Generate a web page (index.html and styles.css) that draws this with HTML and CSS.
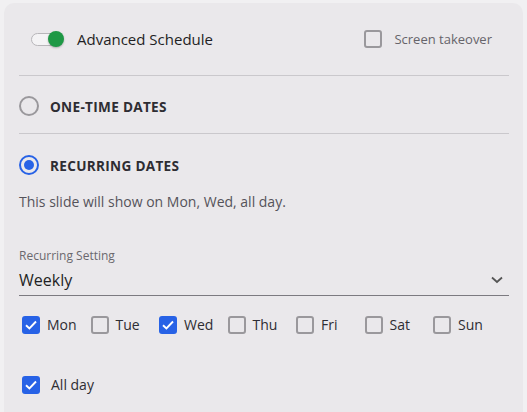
FILE: index.html
```html
<!DOCTYPE html>
<html>
<head>
<meta charset="utf-8">
<link rel="stylesheet" href="styles.css">
</head>
<body>
<div class="card">
  <div class="top-row">
    <div class="adv">
      <span class="toggle"><span class="thumb"></span></span>
      <span class="adv-label">Advanced Schedule</span>
    </div>
    <label class="takeover">
      <span class="box"></span>
      <span class="takeover-label">Screen takeover</span>
    </label>
  </div>
  <div class="divider"></div>
  <div class="radio-row one-time">
    <span class="radio"></span>
    <span class="radio-label">ONE-TIME DATES</span>
  </div>
  <div class="divider"></div>
  <div class="radio-row recurring">
    <span class="radio on"></span>
    <span class="radio-label">RECURRING DATES</span>
  </div>
  <p class="desc">This slide will show on Mon, Wed, all day.</p>
  <div class="field">
    <div class="field-label">Recurring Setting</div>
    <div class="select">
      <span class="select-value">Weekly</span>
      <svg class="chev" width="12" height="8" viewBox="0 0 12 8"><path d="M1 1.5 L6 6 L11 1.5" fill="none" stroke="#555" stroke-width="1.8"/></svg>
    </div>
  </div>
  <div class="days">
    <div class="day"><span class="box checked"><svg viewBox="0 0 18 18" width="18" height="18"><path d="M4 9.3 L7.4 12.5 L14 5.5" fill="none" stroke="#fff" stroke-width="1.9"/></svg></span><span class="day-label">Mon</span></div>
    <div class="day"><span class="box"></span><span class="day-label">Tue</span></div>
    <div class="day"><span class="box checked"><svg viewBox="0 0 18 18" width="18" height="18"><path d="M4 9.3 L7.4 12.5 L14 5.5" fill="none" stroke="#fff" stroke-width="1.9"/></svg></span><span class="day-label">Wed</span></div>
    <div class="day"><span class="box"></span><span class="day-label">Thu</span></div>
    <div class="day"><span class="box"></span><span class="day-label">Fri</span></div>
    <div class="day"><span class="box"></span><span class="day-label">Sat</span></div>
    <div class="day"><span class="box"></span><span class="day-label">Sun</span></div>
  </div>
  <div class="allday">
    <span class="box checked"><svg viewBox="0 0 18 18" width="18" height="18"><path d="M4 9.3 L7.4 12.5 L14 5.5" fill="none" stroke="#fff" stroke-width="1.9"/></svg></span>
    <span class="allday-label">All day</span>
  </div>
</div>
</body>
</html>
```
FILE: styles.css
```css
html, body {
  margin: 0;
  padding: 0;
  background: #f1f0f2;
  font-family: "Open Sans", "Noto Sans", sans-serif;
  overflow: hidden;
}
.card {
  margin: 3px 4px 0 4px;
  height: 420px;
  background: #eae8eb;
  border-radius: 10px 10px 0 0;
  padding: 0 14px 0 15px;
  box-sizing: border-box;
}
.top-row {
  height: 72px;
  display: flex;
  align-items: center;
  justify-content: space-between;
  padding: 0 17px 0 12px;
}
.adv {
  display: flex;
  align-items: center;
}
.toggle {
  position: relative;
  width: 31px;
  height: 13px;
  border-radius: 7px;
  background: #f4f3f5;
  border: 1px solid #b8b6ba;
  box-sizing: border-box;
}
.thumb {
  position: absolute;
  right: -3px;
  top: -2.5px;
  width: 16px;
  height: 16px;
  border-radius: 50%;
  background: #1e9845;
  box-shadow: 0 1px 2px rgba(0,0,0,0.25);
}
.adv-label {
  margin-left: 15px;
  font-size: 15px;
  color: #1f1f24;
}
.takeover {
  display: flex;
  align-items: center;
}
.box {
  display: inline-block;
  width: 18px;
  height: 18px;
  box-sizing: border-box;
  border: 2px solid #9a989c;
  border-radius: 3px;
  flex: none;
}
.box.checked {
  border: none;
  background: #2762e6;
}
.box svg {
  display: block;
}
.takeover-label {
  margin-left: 12px;
  font-size: 13px;
  color: #66646a;
}
.divider {
  height: 1px;
  background: #cac8cc;
}
.radio-row {
  display: flex;
  align-items: center;
}
.one-time {
  height: 57px;
  padding-top: 3px;
  box-sizing: border-box;
}
.recurring {
  margin-top: 21px;
  height: 20px;
}
.radio {
  width: 20px;
  height: 20px;
  border-radius: 50%;
  border: 2px solid #9a989c;
  box-sizing: border-box;
  position: relative;
}
.radio.on {
  border-color: #2762e6;
}
.radio.on::after {
  content: "";
  position: absolute;
  left: 3px;
  top: 3px;
  width: 10px;
  height: 10px;
  border-radius: 50%;
  background: #2762e6;
}
.radio-label {
  margin-left: 11px;
  font-size: 13.6px;
  font-weight: 700;
  color: #2e2d33;
  letter-spacing: 0.3px;
}
.desc {
  margin: 17px 0 0 0;
  font-size: 14px;
  line-height: 20px;
  color: #55535a;
}
.field {
  margin-top: 36px;
}
.field-label {
  font-size: 12px;
  line-height: 16px;
  color: #6a686e;
}
.select {
  display: flex;
  align-items: center;
  justify-content: space-between;
  height: 32px;
  border-bottom: 1px solid #7c7a80;
  box-sizing: border-box;
  padding-right: 6px;
}
.select-value {
  font-size: 16px;
  color: #1f1f24;
}
.chev {
  display: block;
}
.days {
  margin-top: 19px;
  display: flex;
  padding-left: 3px;
}
.day {
  display: flex;
  align-items: center;
  width: 68.5px;
  flex: none;
}
.day-label {
  margin-left: 7px;
  font-size: 14px;
  color: #2e2d33;
}
.allday {
  margin-top: 41px;
  display: flex;
  align-items: center;
  padding-left: 3px;
}
.allday-label {
  margin-left: 11px;
  font-size: 14px;
  color: #2e2d33;
}
```
